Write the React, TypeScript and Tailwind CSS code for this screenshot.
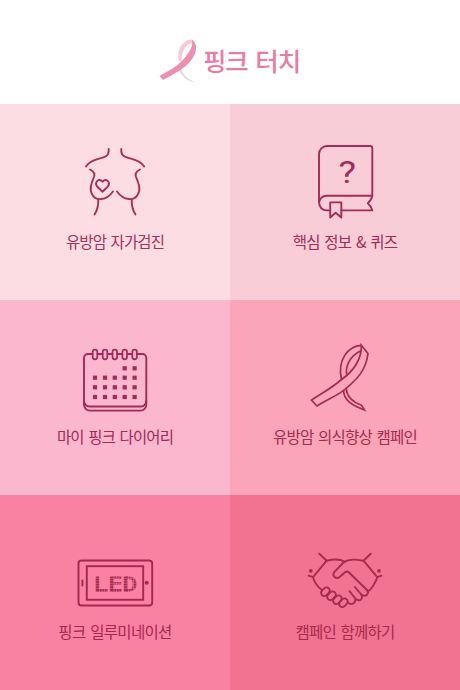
import { ReactNode } from "react";

type TileProps = {
  label: string;
  viewBox: string;
  className: string;
  labelClass: string;
  children: ReactNode;
};

const Tile = ({ label, viewBox, className, labelClass, children }: TileProps) => {
  return (
    <a className={`flex flex-col items-center pt-10 ${className}`}>
      <svg
        width="90"
        height="80"
        viewBox={viewBox}
        fill="none"
        stroke="currentColor"
        strokeWidth="1.9"
        strokeLinecap="round"
        strokeLinejoin="round"
      >
        {children}
      </svg>
      <span className={`whitespace-nowrap text-[15.5px] leading-6 [word-spacing:2px] ${labelClass}`}>{label}</span>
    </a>
  );
};

const columns = [95, 105, 114.8, 124.7, 134.6];
const weeks = [368.3, 377.7, 387.3, 397];
const knuckles = [
  [325.4, 591.7],
  [331.5, 595.8],
  [337.4, 599.7],
  [343.4, 602.8],
];

const Header = () => {
  return (
    <header className="flex h-[104px] items-center pl-[158px] pt-4">
      <svg width="42" height="48" viewBox="158 37 42 48" fill="none">
        <path d="M179 62C176 51 183 41 191 40.500C193 40.500 194 42 193.500 45C189 42 182 49 181.500 62Z" fill="#f8cad9" />
        <path d="M180 67C182 75 187 80 195 83.500C187 82 181 77 178.500 69Z" fill="#e2d6da" />
        <path d="M192 40.500C197 44 198 52 192 60C186 69 174 75 163 81L159.500 77C170 71 180 66 186 57C191 51 193 46 192 40.500Z" fill="#ee8fb1" />
      </svg>
      <h1 className="ml-[3px] whitespace-nowrap text-[25.5px] font-medium leading-8 tracking-[-1.1px] text-[#ea7ba2] [word-spacing:3px]">핑크 터치</h1>
    </header>
  );
};

export default function App() {
  return (
    <div className="h-[690px] w-[460px] bg-white font-['Noto_Sans_CJK_KR',sans-serif]">
      <Header />
      <main className="grid grid-cols-2 grid-rows-[196px_195px_195px]">
        <Tile label="유방암 자가검진" viewBox="70 144 90 80" className="bg-[#fddde4] text-[#a5305a]" labelClass="mt-[5px] tracking-[-0.9px]">
          <path d="M108.700 149V151C108.700 161 92 156 86 166.500M121.300 149V151C121.300 161 138 156 144.200 166.500" />
          <path d="M90 169.500C93 171 95.500 173 94 177C91 184 89 190 92.500 195C96 201 106 201 113 191.500" />
          <path d="M140 169.500C137 171 134.500 173 136 177C139 184 141 190 137.500 195C134 201 124 201 117 191.500" />
          <path d="M98.300 199.500C98.500 205 97.500 210 94.500 214.500M131.700 199.500C131.500 205 132.500 210 135.500 214.500" />
          <path d="M102.500 191.700L97.600 187C93.500 182.500 99.500 177 102.500 181.800C105.500 177 111.500 182.500 107.400 187Z" />
        </Tile>

        <Tile label="핵심 정보 & 퀴즈" viewBox="300 144 90 80" className="bg-[#f8cdd8] text-[#a22c57]" labelClass="mt-[5px] tracking-[-0.8px]">
          <path d="M319 203V154A8 8 0 0 1 327 146H370A2.300 2.300 0 0 1 372.300 148.300V195.700H326.500A7.300 7.300 0 0 0 326.500 210.400H330" />
          <path d="M341.500 210.400H372.300C371.500 207 370 205 367.800 203.200C370.500 201 371.800 199 372.300 195.700" />
          <path d="M330.200 202.400H341.300V217.500L335.700 212.800L330.200 217.500Z" />
          <text
            x="338.500"
            y="183"
            textLength="17.500"
            lengthAdjust="spacingAndGlyphs"
            fontFamily="Roboto, sans-serif"
            fontSize="32"
            fill="currentColor"
            stroke="none"
          >
            ?
          </text>
        </Tile>

        <Tile label="마이 핑크 다이어리" viewBox="70 340 90 80" className="bg-[#fab7cd] text-[#a22a58]" labelClass="mt-1 tracking-[-0.9px]">
          <path d="M92.500 354H88A4 4 0 0 0 84 358V404.500A6 6 0 0 0 90 410.600H140.300A6 6 0 0 0 146.300 404.500V358A4 4 0 0 0 142.300 354H137.300" />
          <path d="M84 401A5.500 5.500 0 0 0 89.500 406.500H140.800A5.500 5.500 0 0 0 146.300 401" />
          <path d="M97.500 354H102.500M107.500 354H112.300M117.300 354H122.200M127.200 354H132.100" />
          {columns.map((x) => (
            <rect key={x} x={x - 2.3} y="349.600" width="4.600" height="9.800" rx="2.300" strokeWidth="1.700" />
          ))}
          {weeks.map((y, row) =>
            columns
              .filter((_, col) => row > 0 || col > 2)
              .map((x) => <rect key={`${x}-${y}`} x={x - 2.1} y={y - 2.1} width="4.200" height="4.200" fill="currentColor" stroke="none" />)
          )}
        </Tile>

        <Tile label="유방암 의식향상 캠페인" viewBox="300 340 90 80" className="bg-[#faa5b8] text-[#a32c50]" labelClass="mt-1 tracking-[-0.8px]">
          <g strokeWidth="1.700" strokeLinejoin="miter">
            <path d="M311.500 400.200L317 406C328 399 339 395 346 388.500C356 380 366 371 368 353.500L361.300 345.300C362 358 354 371 341.500 379.500C332 388 322 393 311.500 400.200Z" />
            <path d="M361.300 345.300C348 346 337 360 341.500 379.500" />
            <path d="M360.500 351C350 356 345 366 346.800 375.500" />
            <path d="M343.500 390.500C344 400 351 405 364.500 410L361.500 405.200C352 402 347 396 346 388.500" />
          </g>
        </Tile>

        <Tile label="핑크 일루미네이션" viewBox="70 535 90 80" className="bg-[#f981a2] text-[#a42751]" labelClass="mt-1 tracking-[-0.7px]">
          <rect x="78.500" y="560.500" width="73.700" height="45" rx="3" />
          <rect x="86.800" y="566.200" width="56.400" height="33.600" strokeLinejoin="miter" />
          <path d="M82.400 580.500V585.500" />
          <circle cx="146.700" cy="582.800" r="2" fill="currentColor" stroke="none" />
          <text
            x="93.700"
            y="590.500"
            textLength="43.500"
            lengthAdjust="spacingAndGlyphs"
            fontFamily="DejaVu Sans Mono, monospace"
            fontSize="20"
            fill="currentColor"
            strokeWidth="0.900"
          >
            LED
          </text>
          {/* dot matrix */}
          <path
            d="M94 578.300H137M94 580.800H137M94 583.300H137M94 585.800H137M94 588.300H137M99.500 575V592M102 575V592M104.500 575V592M107 575V592M114 575V592M116.500 575V592M119 575V592M121.500 575V592M128.500 575V592M131 575V592M133.500 575V592"
            stroke="#f981a2"
            strokeWidth="0.500"
          />
        </Tile>

        <Tile label="캠페인 함께하기" viewBox="300 535 90 80" className="bg-[#f27391] text-[#a72a4d]" labelClass="mt-1 tracking-[-0.8px]">
          <path d="M319.300 553.700L326.700 560.700L313 577.200L308.500 575.700M313 577.200C315 584 318 587 322 590" />
          <path d="M370.700 553.700L363.500 560.700L377.300 577.200L381.500 575.700M377.300 577.200C375 584 371 589 367.800 592" />
          <path d="M326.700 560.700C334 559 340 559 344.500 561.500" />
          <path d="M363.500 560.700C356 559.500 349 558.500 343.500 562.500L334.500 571.800C331.500 576 336 580 340 576.800L345 572.200Q347 570.500 349 572.500L366.500 589.500C370 593.500 366 597.800 361.300 594.500L354.800 587" />
          <path d="M361.300 594.500C363.500 599 359.500 602.500 355.300 598.500L349.500 591.200M355.300 598.500C356 603.500 351.500 605.500 347.500 602.500" />
          {knuckles.map(([x, y]) => (
            <rect key={x} x={x - 4.8} y={y - 3.2} width="9.600" height="6.400" rx="3.200" transform={`rotate(-45 ${x} ${y})`} />
          ))}
          <circle cx="310.800" cy="570.800" r="1.900" fill="currentColor" stroke="none" />
          <circle cx="379" cy="570.800" r="1.900" fill="currentColor" stroke="none" />
        </Tile>
      </main>
    </div>
  );
}
